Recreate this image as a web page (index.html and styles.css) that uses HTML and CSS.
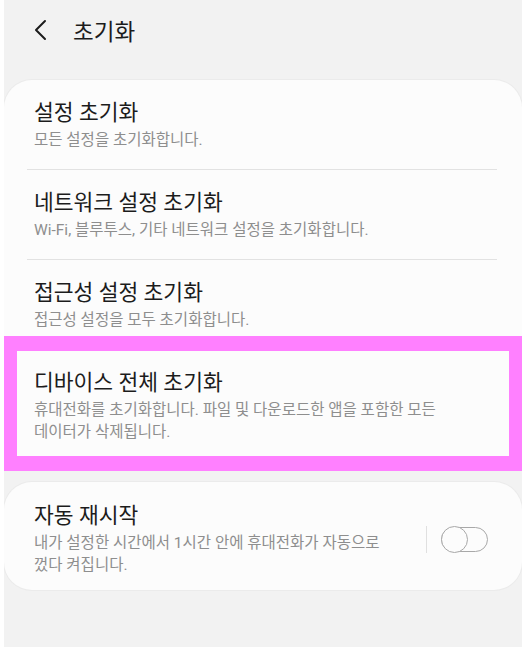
FILE: index.html
```html
<!DOCTYPE html>
<html lang="ko">
<head>
  <meta charset="UTF-8" />
  <meta name="viewport" content="width=device-width,initial-scale=1.0" />
  <title>초기화</title>
  <link rel="stylesheet" href="styles.css">
</head>
<body>
  <div class="screen">
    <!-- Header -->
    <div class="app-bar">
      <svg class="back" width="14" height="22" viewBox="0 0 14 22">
        <polyline points="11,2 2,11 11,20" fill="none" stroke="#1c1c1c" stroke-width="2" stroke-linecap="round" stroke-linejoin="round"/>
      </svg>
      <span class="app-title">초기화</span>
    </div>

    <!-- Reset options -->
    <div class="card">
      <div class="row">
        <div class="row-title">설정 초기화</div>
        <div class="row-sub">모든 설정을 초기화합니다.</div>
      </div>
      <div class="divider"></div>
      <div class="row">
        <div class="row-title">네트워크 설정 초기화</div>
        <div class="row-sub">Wi-Fi, 블루투스, 기타 네트워크 설정을 초기화합니다.</div>
      </div>
      <div class="divider"></div>
      <div class="row">
        <div class="row-title">접근성 설정 초기화</div>
        <div class="row-sub">접근성 설정을 모두 초기화합니다.</div>
      </div>
      <div class="divider"></div>
      <div class="row row-marked">
        <div class="row-title">디바이스 전체 초기화</div>
        <div class="row-sub">휴대전화를 초기화합니다. 파일 및 다운로드한 앱을 포함한 모든 데이터가 삭제됩니다.</div>
        <div class="highlight"></div>
      </div>
    </div>

    <!-- Auto restart -->
    <div class="card card-switch">
      <div class="switch-text">
        <div class="row-title">자동 재시작</div>
        <div class="row-sub">내가 설정한 시간에서 1시간 안에 휴대전화가 자동으로 껐다 켜집니다.</div>
      </div>
      <div class="v-divider"></div>
      <div class="toggle">
        <div class="knob"></div>
      </div>
    </div>
  </div>
</body>
</html>
```

FILE: styles.css
```css
/* Base */
body {
  margin: 0;
  padding: 0;
  background-color: #ffffff;
  font-family: Roboto, "Noto Sans CJK KR", sans-serif;
}

.screen {
  margin-left: 4px;
  min-height: 647px;
  background-color: #f2f2f2;
  overflow: hidden;
}

/* Header */
.app-bar {
  height: 60px;
  display: flex;
  align-items: center;
  padding-left: 30px;
}
.back {
  display: block;
}
.app-title {
  margin-left: 25px;
  font-size: 22.5px;
  color: #1c1c1c;
}

/* Cards */
.card {
  margin-top: 20px;
  background-color: #fcfcfc;
  border-radius: 28px;
  box-shadow: 0 0 0 1px #ebebeb;
  width: 518px;
}

.row {
  padding: 19px 30px 18px 30px;
}
.row-title {
  font-size: 21.5px;
  line-height: 28px;
  color: #1c1c1c;
}
.row-sub {
  margin-top: 2px;
  font-size: 15.5px;
  line-height: 22px;
  color: #8e8e8e;
  word-break: keep-all;
}

.divider {
  height: 1px;
  background-color: #e2e2e2;
  margin: 0 25px 0 23px;
}

/* Pink marker drawn over the last row */
.row-marked {
  position: relative;
}
.highlight {
  position: absolute;
  top: -14px;
  left: -2px;
  right: -2px;
  bottom: -10px;
  border: 15px solid #ff80ff;
}

/* Auto restart card */
.card-switch {
  margin-top: 21px;
  display: flex;
  align-items: center;
  padding: 20px 34px 14px 30px;
  box-sizing: border-box;
}
.switch-text {
  flex: 1;
  padding-right: 20px;
}
.v-divider {
  width: 1px;
  height: 27px;
  background-color: #e0e0e0;
  margin-right: 14px;
}
.toggle {
  position: relative;
  width: 47px;
  height: 25px;
  border: 1.5px solid #a8a8a8;
  border-radius: 14px;
  box-sizing: border-box;
}
.knob {
  position: absolute;
  top: -2px;
  left: -1.5px;
  width: 27px;
  height: 27px;
  border: 1.5px solid #a8a8a8;
  border-radius: 50%;
  background-color: #fcfcfc;
  box-sizing: border-box;
}
```
